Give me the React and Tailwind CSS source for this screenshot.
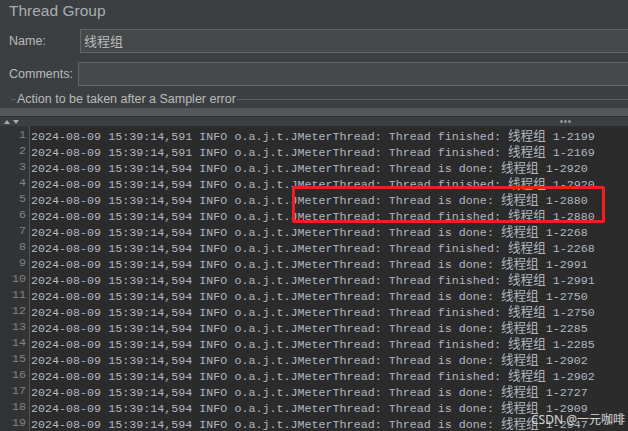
const rows = [
  ["591", "finished", "1-2199"],
  ["591", "finished", "1-2169"],
  ["594", "is done", "1-2920"],
  ["594", "finished", "1-2920"],
  ["594", "is done", "1-2880"],
  ["594", "finished", "1-2880"],
  ["594", "is done", "1-2268"],
  ["594", "finished", "1-2268"],
  ["594", "is done", "1-2991"],
  ["594", "finished", "1-2991"],
  ["594", "is done", "1-2750"],
  ["594", "finished", "1-2750"],
  ["594", "is done", "1-2285"],
  ["594", "finished", "1-2285"],
  ["594", "is done", "1-2902"],
  ["594", "finished", "1-2902"],
  ["594", "is done", "1-2727"],
  ["594", "is done", "1-2909"],
  ["594", "is done", "1-2947"],
];

const LogLine = ({ ms, verb, id }) => (
  <div className="h-4 leading-4 whitespace-pre">
    {`2024-08-09 15:39:14,${ms} INFO o.a.j.t.JMeterThread: Thread ${verb}: `}
    <span className="text-[12.6px] font-['Noto_Sans_CJK_SC',sans-serif]">线程组</span>
    {` ${id}`}
  </div>
);

const App = () => {
  return (
    <div className="w-[628px] h-[431px] overflow-hidden bg-[#3c3f41] font-['Liberation_Sans','Noto_Sans_CJK_SC',sans-serif] text-[#bbbbbb] flex flex-col">
      <div className="h-[25px] pl-[9px] pt-[1px] text-[15.5px] leading-[20px] text-[#a7adb3]">Thread Group</div>

      <div className="flex items-center h-[24px] mt-[4px]">
        <span className="w-[80px] pl-[9px] text-[12.5px]">Name:</span>
        <div className="flex-1 h-[24px] border border-r-0 border-[#646464] bg-[#45494a] pl-[3px] flex items-center text-[13px] font-['Noto_Sans_CJK_SC',sans-serif] text-[#bbbbbb]">
          线程组
        </div>
      </div>

      <div className="flex items-center h-[24px] mt-[9px]">
        <span className="w-[78px] pl-[9px] text-[12.5px]">Comments:</span>
        <div className="flex-1 h-[24px] border border-r-0 border-[#646464] bg-[#45494a]" />
      </div>

      <div className="flex items-center h-[14px] mt-[6px]">
        <div className="w-[5px] ml-[11px] border-t border-[#5e6060]" />
        <span className="px-[1px] text-[12.5px] leading-[14px] text-[#bbbbbb]">Action to be taken after a Sampler error</span>
        <div className="flex-1 border-t border-[#5e6060]" />
      </div>

      <div className="h-[9px] mt-[2px] bg-[#555758] border-b border-[#2f3133]" />

      <div className="h-[9px] flex items-center relative">
        <div className="flex items-center gap-[3px] pl-[4px]">
          <svg width="6" height="4" viewBox="0 0 6 4"><path d="M0 4 L3 0 L6 4 Z" fill="#a9adb0" /></svg>
          <svg width="6" height="4" viewBox="0 0 6 4"><path d="M0 0 L6 0 L3 4 Z" fill="#a9adb0" /></svg>
        </div>
        <div className="absolute left-[560px] top-[3px] flex gap-[1px]">
          <span className="w-[3px] h-[3px] rounded-full bg-[#8e9296]" />
          <span className="w-[3px] h-[3px] rounded-full bg-[#8e9296]" />
          <span className="w-[3px] h-[3px] rounded-full bg-[#8e9296]" />
        </div>
      </div>

      <div className="flex-1 flex bg-[#2b2b2b] relative font-['Liberation_Mono','Noto_Sans_CJK_SC',monospace] text-[11.7px]">
        <div className="w-[30px] pr-[3px] pt-[1px] bg-[#313335] border-r border-[#555555] text-right text-[#7f8386]">
          {rows.map((_, i) => (
            <div key={i} className="h-4 leading-4">{i + 1}</div>
          ))}
        </div>
        <div className="pl-[1px] pt-[1px] text-[#afb8c2]">
          {rows.map(([ms, verb, id], i) => (
            <LogLine key={i} ms={ms} verb={verb} id={id} />
          ))}
        </div>

        <div className="absolute left-[292px] top-[60px] w-[313px] h-[37px] border-[3px] border-[#f21d1d] rounded-[2px]" />
        <div className="absolute left-[531px] top-[287px] whitespace-nowrap text-[12px] leading-[14px] text-white/75 [text-shadow:0_0_1px_#555] font-['Noto_Sans','Noto_Sans_CJK_SC',sans-serif]">
          CSDN @一元咖啡
        </div>
      </div>
    </div>
  );
};

export default App;
